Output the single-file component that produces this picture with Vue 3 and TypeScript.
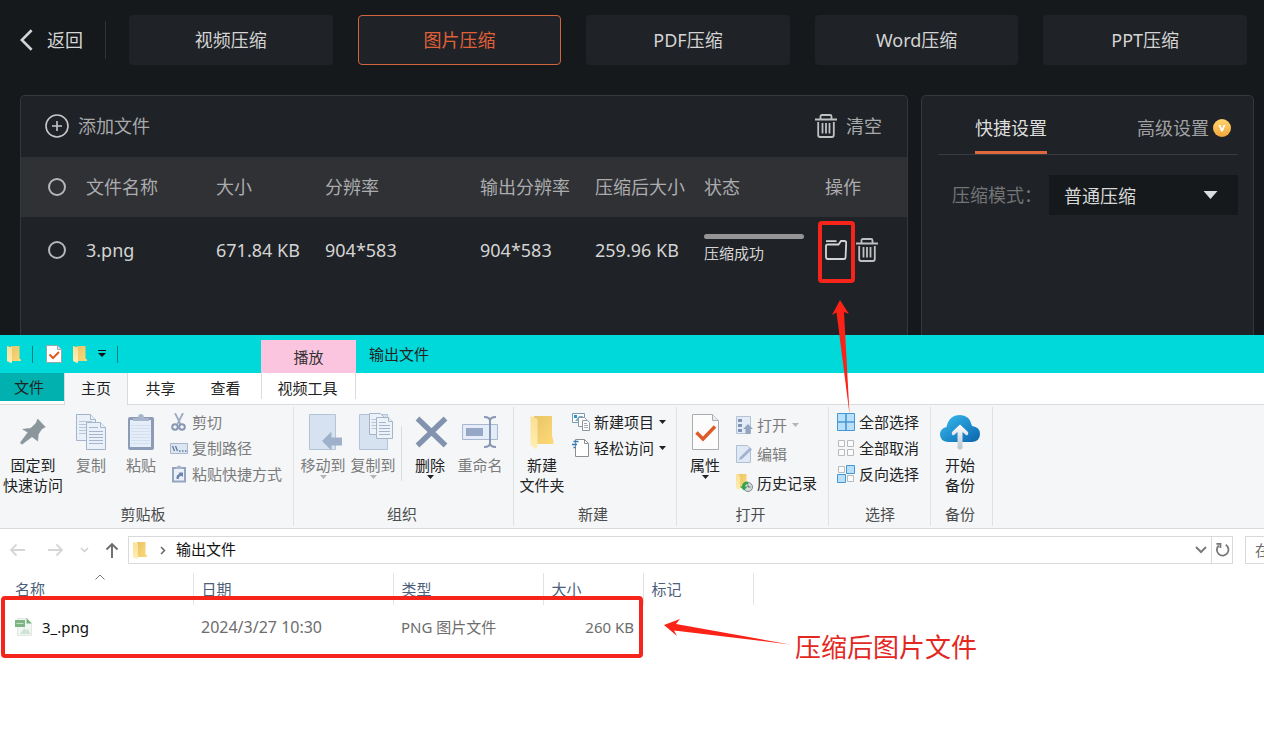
<script setup lang="ts">
import { ref } from 'vue'

interface Cmd {
  icon: string
  label: string[]
  off?: boolean
  arrow?: boolean
  wide?: boolean
}
interface Group {
  id: string
  label: string
  big: Cmd[]
  after?: Cmd[]
  small: Cmd[]
}

const modes = ['视频压缩', '图片压缩', 'PDF压缩', 'Word压缩', 'PPT压缩']
const activeMode = ref('图片压缩')
const preset = ref('普通压缩')
const columns = ['文件名称', '大小', '分辨率', '输出分辨率', '压缩后大小', '状态', '操作']

const groups: Group[] = [
  {
    id: 'clip',
    label: '剪贴板',
    big: [
      { icon: 'pin', label: ['固定到', '快速访问'], wide: true },
      { icon: 'copy', label: ['复制'], off: true },
      { icon: 'paste', label: ['粘贴'], off: true },
    ],
    small: [
      { icon: 'cut', label: ['剪切'], off: true },
      { icon: 'path', label: ['复制路径'], off: true },
      { icon: 'shortcut', label: ['粘贴快捷方式'], off: true },
    ],
  },
  {
    id: 'org',
    label: '组织',
    big: [
      { icon: 'moveto', label: ['移动到'], off: true, arrow: true },
      { icon: 'copyto', label: ['复制到'], off: true, arrow: true },
    ],
    after: [
      { icon: 'delete', label: ['删除'], arrow: true },
      { icon: 'rename', label: ['重命名'], off: true },
    ],
    small: [],
  },
  {
    id: 'new',
    label: '新建',
    big: [{ icon: 'newfolder', label: ['新建', '文件夹'] }],
    small: [
      { icon: 'newitem', label: ['新建项目'], arrow: true },
      { icon: 'easy', label: ['轻松访问'], arrow: true },
    ],
  },
  {
    id: 'open',
    label: '打开',
    big: [{ icon: 'props', label: ['属性'], arrow: true }],
    small: [
      { icon: 'open', label: ['打开'], off: true, arrow: true },
      { icon: 'edit', label: ['编辑'], off: true },
      { icon: 'history', label: ['历史记录'] },
    ],
  },
  {
    id: 'select',
    label: '选择',
    big: [],
    small: [
      { icon: 'all', label: ['全部选择'] },
      { icon: 'none', label: ['全部取消'] },
      { icon: 'invert', label: ['反向选择'] },
    ],
  },
  {
    id: 'backup',
    label: '备份',
    big: [{ icon: 'cloud', label: ['开始', '备份'] }],
    small: [],
  },
]
</script>

<template>
  <div class="page">
    <svg class="defs" aria-hidden="true">
      <defs>
        <linearGradient id="gFold" x1="0" x2="1" y1="0" y2="1">
          <stop offset="0" stop-color="#e8c469" /><stop offset="1" stop-color="#ffd977" />
        </linearGradient>
        <linearGradient id="gFlap" x1="0" x2="0" y1="0" y2="1">
          <stop offset="0" stop-color="#fbdf93" /><stop offset="1" stop-color="#ffeeb4" />
        </linearGradient>
        <linearGradient id="gCloud" x1="0" x2="1" y1="0" y2="1">
          <stop offset="0" stop-color="#38bdf0" /><stop offset="1" stop-color="#0a64ad" />
        </linearGradient>
        <linearGradient id="gUp" x1="0" x2="0" y1="0" y2="1">
          <stop offset="0" stop-color="#ffffff" /><stop offset="1" stop-color="#b9c2ce" />
        </linearGradient>
        <linearGradient id="gCoin" x1="0" x2="0" y1="0" y2="1">
          <stop offset="0" stop-color="#ffd56e" /><stop offset="1" stop-color="#f2a63a" />
        </linearGradient>
      </defs>
      <symbol id="trash" viewBox="0 0 22 24">
        <g fill="none" stroke="currentColor" stroke-width="1.8">
          <path d="M0 5.500h22M5.500 5V2.500Q5.500 1 7 1h8q1.500 0 1.500 1.500V5M3.200 8v13q0 2 2 2h11.600q2 0 2-2V8M7.500 9v10.500M11 9v10.500M14.500 9v10.500" />
        </g>
      </symbol>
      <symbol id="folder" viewBox="0 0 14 18">
        <path d="M4 1h8.500v12.500l1.500 1V16H4z" fill="url(#gFold)" />
        <path d="M0 1l5 1.500V17.500L4 18l-4-2z" fill="url(#gFlap)" />
      </symbol>
      <symbol id="pin" viewBox="0 0 44 37">
        <path d="M26.700 6l7.600 8-3.600 2-3.400 5.300-.6 6.700-5.700-4.300L11 31.300l-1.700-1.600L17 19.300l-5.300-3 8-1 5.300-5z" fill="#8b969c" stroke="#8b969c" stroke-width=".6" stroke-linejoin="round" />
      </symbol>
      <symbol id="copy" viewBox="0 0 44 37">
        <g fill="#eaf0f8" stroke="#a3b4cb">
          <path d="M7.500 1.500h14l5 5v21h-19z" /><path d="M21.500 1.500v5h5" />
          <path d="M10 8.500h13M10 11.500h13M10 14.500h13M10 17.500h13M10 20.500h13" stroke="#b7c6d9" />
          <path d="M17.500 9.500h14l5 5v22h-19z" /><path d="M31.500 9.500v5h5" />
          <path d="M20 14.500h9M20 18.500h14M20 21.500h14M20 24.500h14M20 27.500h14M20 30.500h14" />
        </g>
      </symbol>
      <symbol id="paste" viewBox="0 0 44 37">
        <rect x="9" y="4" width="26" height="33" rx="2" fill="#8d9cb6" />
        <path d="M11 7h21v27H11z" fill="#e4edf8" />
        <path d="M12 12.500h19M12 15.500h19M12 18.500h19M12 21.500h19M12 24.500h19M12 27.500h19M12 30.500h19" stroke="#d3e0ef" />
        <path d="M14 8V5h5q0-4 3-4t3 4h5v3z" fill="#a8b5ca" />
      </symbol>
      <symbol id="moveto" viewBox="0 0 44 37">
        <path d="M8.500 1.500h26v35h-26z" fill="#d7e2f1" stroke="#b5c3d8" />
        <path d="M21 28l9.500-9.500v6H41v8H30.500v5z" fill="#9fb1ca" />
      </symbol>
      <symbol id="copyto" viewBox="0 0 44 37">
        <path d="M8.500 1.500h28v35h-28z" fill="#d7e2f1" stroke="#b5c3d8" />
        <g fill="#edf2f9" stroke="#a3b4cb">
          <path d="M18.500.5h11l4 4v17h-15z" />
          <path d="M20.500 6.500h9M20.500 9.500h9M20.500 12.500h9M20.500 15.500h9" stroke="#b7c6d9" />
          <path d="M25.500 4.500h12l4 4v17h-16z" /><path d="M37.500 4.500v4h4" />
          <path d="M28 9.500h7M28 12.500h11M28 15.500h11M28 18.500h11M28 21.500h11" />
        </g>
      </symbol>
      <symbol id="delete" viewBox="0 0 44 37">
        <path d="M9.500 5.500l28 27M37.500 5.500l-28 27" stroke="#8393af" stroke-width="5.400" />
      </symbol>
      <symbol id="rename" viewBox="0 0 44 37">
        <path d="M4.500 11.500h35v15h-35z" fill="#e3ecf8" stroke="#a9b8ce" />
        <path d="M8 15h17v8H8z" fill="#96a7c3" />
        <path d="M26 4q6 0 6 4v22q0 4-6 4M38 4q-6 0-6 4v22q0 4 6 4" fill="none" stroke="#8797b4" stroke-width="2" />
      </symbol>
      <symbol id="newfolder" viewBox="0 0 44 37">
        <path d="M14 3h18v20l1.500 5V31H17z" fill="url(#gFold)" />
        <path d="M10.500 3l7 3v27l-1.500 3.500-5.500-4.500z" fill="url(#gFlap)" />
      </symbol>
      <symbol id="props" viewBox="0 0 44 37">
        <path d="M9.500 1.500h20l6 6v29h-26z" fill="#fcfcfd" stroke="#aaadb1" />
        <path d="M29.500 1.500v6h6" fill="#e8e9eb" stroke="#aaadb1" />
        <path d="M13.500 19.500l6.500 6.500L32 13.500" fill="none" stroke="#dd5b27" stroke-width="3.400" />
      </symbol>
      <symbol id="cloud" viewBox="0 0 44 37">
        <path d="M10 29q-8-1-8-7.500 0-6 6.500-7.500Q11 2 22 2q9.500 0 12 11 8 1 8 8t-8 8z" fill="url(#gCloud)" />
        <path d="M19.500 35V19l-4 3.500q-3-1-1-4L22 11.500l7.500 7q2 3-1 4l-4-3.500v16q-2.500 3-5 0z" fill="url(#gUp)" />
      </symbol>
      <symbol id="cut" viewBox="0 0 18 18">
        <path d="M5 0l5.500 11M13 0L7.500 11" fill="none" stroke="#9dabc0" stroke-width="1.800" />
        <circle cx="5" cy="14" r="2.800" fill="none" stroke="#8797b2" stroke-width="2" />
        <circle cx="12" cy="14" r="2.800" fill="none" stroke="#8797b2" stroke-width="2" />
      </symbol>
      <symbol id="path" viewBox="0 0 18 18">
        <path d="M.5 4.500h17v10H.5z" fill="#dce6f3" stroke="#a8b7cd" />
        <path d="M2.500 7l2 5M5.500 7l2 5M9 12h1.500M12 12h1.500M15 12h1.500" stroke="#647a9c" stroke-width="1.300" />
      </symbol>
      <symbol id="shortcut" viewBox="0 0 18 18">
        <path d="M2 2h14v15.500H2z" fill="#96a5be" /><path d="M4 4h10v11.500H4z" fill="#eaf0f9" />
        <path d="M6 2.500q3-4 6 0v1.500H6z" fill="#a8b5ca" />
        <path d="M6.500 14q-.5-4.500 3-5L8.500 7.500H13V12l-1.500-1.300Q9 11 8.700 14z" fill="#6c83a8" />
      </symbol>
      <symbol id="newitem" viewBox="0 0 18 18">
        <path d="M.5.500h12v9H.5z" fill="#fff" stroke="#7a9bb3" /><path d="M2 2h3v3H2z" fill="#2f95c9" /><path d="M7 3h4v5H3z" fill="#7bb0c4" />
        <path d="M6.500 4.500h6l2 2v7h-8z" fill="#fff" stroke="#8d969e" />
        <path d="M10.500 7.500h5l2 2v8h-7z" fill="#fff" stroke="#8d969e" />
        <path d="M12 10.500h3M12 12.500h4M12 14.500h4" stroke="#9eaab4" />
      </symbol>
      <symbol id="easy" viewBox="0 0 18 18">
        <path d="M3.500.500h9l4 4v13h-13z" fill="#fff" stroke="#8b8f94" /><path d="M12.500.500v4h4" fill="none" stroke="#8b8f94" />
        <path d="M1.500 2.500h5M0 5.500h5M1.500 8.500h2" stroke="#2b78b5" stroke-width="1.500" />
      </symbol>
      <symbol id="open" viewBox="0 0 18 18">
        <path d="M1.500.500h14v17h-14z" fill="#e3ebf6" stroke="#b5c3d6" />
        <path d="M3 3h4v3H3zM3 8h4v3H3zM3 13h4v3H3z" fill="#8093b2" />
        <path d="M13 8l5 5h-2.500v5h-5v-5H8z" fill="#93a5c1" />
      </symbol>
      <symbol id="edit" viewBox="0 0 18 18">
        <path d="M1.500.500h11l3 3v14h-14z" fill="#dfe8f5" stroke="#b0bfd4" />
        <path d="M4 15l1-3L15 2.500l2 2L7 14z" fill="#a1b3ce" />
      </symbol>
      <symbol id="history" viewBox="0 0 18 18">
        <path d="M3 0h8.500v14H3z" fill="url(#gFold)" /><path d="M1 0l4 1.500v14L1 15z" fill="url(#gFlap)" />
        <circle cx="13" cy="13" r="4.500" fill="#d5dadb" stroke="#7e898b" /><path d="M13 10.500V13h2.500" fill="none" stroke="#657174" />
        <path d="M13 7.500q-6 0-6 5H5l4 4 3.500-4H10q0-2 3-2.500z" fill="#31a34b" />
      </symbol>
      <symbol id="all" viewBox="0 0 18 18">
        <path d="M.5.500h17v17H.5z" fill="#b9e0fa" stroke="#4598d3" /><path d="M9 0v18M0 9h18" stroke="#4598d3" stroke-width="1.600" />
      </symbol>
      <symbol id="none" viewBox="0 0 18 18">
        <path d="M1.500 1.500h6v6h-6zM10.500 1.500h6v6h-6zM1.500 10.500h6v6h-6zM10.500 10.500h6v6h-6z" fill="#fbfbfb" stroke="#b9bcbf" />
      </symbol>
      <symbol id="invert" viewBox="0 0 18 18">
        <path d="M1.500 1.500h6v6h-6zM10.500 10.500h6v6h-6z" fill="#fbfbfb" stroke="#b9bcbf" />
        <path d="M9.500.500h8v8h-8zM.5 9.500h8v8h-8z" fill="#b9e0fa" stroke="#4598d3" />
      </symbol>
    </svg>

    <section class="app">
      <header class="top">
        <button class="back">
          <svg class="chev" viewBox="0 0 14 24"><path d="M12.500 1.500L2 12l10.500 10.500" fill="none" stroke="currentColor" stroke-width="2.800" /></svg>
          返回
        </button>
        <nav class="modes">
          <button v-for="m in modes" :key="m" class="mode" :class="{ on: m === activeMode }" @click="activeMode = m">{{ m }}</button>
        </nav>
      </header>

      <div class="body">
        <div class="panel">
          <div class="tools">
            <button class="tool">
              <svg class="plus" viewBox="0 0 24 24"><g fill="none" stroke="currentColor" stroke-width="1.600"><circle cx="12" cy="12" r="11" /><path d="M12 7v10M7 12h10" /></g></svg>
              添加文件
            </button>
            <button class="tool">
              <svg class="bin"><use href="#trash" /></svg>
              清空
            </button>
          </div>
          <table class="jobs">
            <colgroup>
              <col class="c1" /><col class="c2" /><col class="c3" /><col class="c4" /><col class="c5" /><col class="c3" /><col class="c6" /><col />
            </colgroup>
            <thead>
              <tr>
                <th><input type="checkbox" aria-label="全选" /></th>
                <th v-for="c in columns" :key="c">{{ c }}</th>
              </tr>
            </thead>
            <tbody>
              <tr>
                <td><input type="checkbox" aria-label="3.png" /></td>
                <td>3.png</td>
                <td>671.84 KB</td>
                <td>904*583</td>
                <td>904*583</td>
                <td>259.96 KB</td>
                <td><div class="bar"></div><div class="state">压缩成功</div></td>
                <td>
                  <div class="ops">
                    <button aria-label="打开文件夹" class="op">
                      <svg class="opf" viewBox="0 0 22 20"><path d="M1 1.200h10.500M1 6v11q0 2 2 2h16q1.500 0 1.600-2L21.200 2.800q0-1.800-1.700-1.800H16l-2.500 3.500H2.500Q1 4.500 1 6" fill="none" stroke="currentColor" stroke-width="1.800" /></svg>
                    </button>
                    <button aria-label="删除任务" class="op"><svg class="bin"><use href="#trash" /></svg></button>
                  </div>
                </td>
              </tr>
            </tbody>
          </table>
        </div>

        <aside class="panel side">
          <div class="tabs">
            <button class="tab on">快捷设置</button>
            <button class="tab">
              高级设置
              <svg class="coin" viewBox="0 0 18 18"><circle cx="9" cy="9" r="9" fill="url(#gCoin)" /><path d="M5.500 6h2L9 10l1.500-4h2L9.800 12.500H8.200z" fill="#fff" /></svg>
            </button>
          </div>
          <div class="setting">
            <label for="preset">压缩模式：</label>
            <div class="pick">
              <select id="preset" v-model="preset"><option>普通压缩</option><option>高级压缩</option></select>
              <svg class="tri" viewBox="0 0 14 8"><path d="M0 0h14L7 8z" fill="#dcdcdc" /></svg>
            </div>
          </div>
        </aside>
      </div>
    </section>

    <section class="explorer">
      <header class="title">
        <div class="quick">
          <svg class="fold"><use href="#folder" /></svg>
          <i class="tick"></i>
          <button aria-label="属性" class="qb">
            <svg class="doc" viewBox="0 0 16 18"><path d="M.5.500h11l4 4v13H.5z" fill="#fff" stroke="#9aa5aa" /><path d="M11.500.500v4h4" fill="#dde" stroke="#9aa5aa" /><path d="M3.500 9.500l3.500 3.500 6-6" fill="none" stroke="#dd5b27" stroke-width="2" /></svg>
          </button>
          <button aria-label="新建文件夹" class="qb"><svg class="fold"><use href="#folder" /></svg></button>
          <button aria-label="自定义快速访问工具栏" class="qb">
            <svg class="cust" viewBox="0 0 8 8"><path d="M0 .5h8" stroke="#111" /><path d="M0 3h8L4 7z" fill="#111" /></svg>
          </button>
          <i class="tick"></i>
        </div>
        <div class="context">播放</div>
        <h1>输出文件</h1>
      </header>

      <nav class="rtabs">
        <button class="file">文件</button>
        <button class="home">主页</button>
        <button class="plain">共享</button>
        <button class="plain">查看</button>
        <button class="video">视频工具</button>
      </nav>

      <div class="ribbon">
        <div v-for="g in groups" :key="g.id" class="group" :class="g.id">
          <div class="cmds">
            <button v-for="c in g.big" :key="c.icon" class="big" :class="{ off: c.off, wide: c.wide }">
              <svg class="bi"><use :href="'#' + c.icon" /></svg>
              <span v-for="l in c.label" :key="l">{{ l }}</span>
              <svg v-if="c.arrow" class="dn" viewBox="0 0 7 4"><path d="M0 0h7L3.500 4z" fill="currentColor" /></svg>
            </button>
            <i v-if="g.after" class="rule"></i>
            <button v-for="c in g.after" :key="c.icon" class="big" :class="{ off: c.off }">
              <svg class="bi"><use :href="'#' + c.icon" /></svg>
              <span v-for="l in c.label" :key="l">{{ l }}</span>
              <svg v-if="c.arrow" class="dn" viewBox="0 0 7 4"><path d="M0 0h7L3.500 4z" fill="currentColor" /></svg>
            </button>
            <div v-if="g.small.length" class="stack">
              <button v-for="c in g.small" :key="c.icon" class="small" :class="{ off: c.off }">
                <svg class="si"><use :href="'#' + c.icon" /></svg>
                <span>{{ c.label[0] }}</span>
                <svg v-if="c.arrow" class="dn" viewBox="0 0 7 4"><path d="M0 0h7L3.500 4z" fill="currentColor" /></svg>
              </button>
            </div>
          </div>
          <div class="gname">{{ g.label }}</div>
        </div>
      </div>

      <div class="address">
        <div class="navs">
          <button aria-label="后退"><svg class="nv" viewBox="0 0 16 14"><path d="M16 7H2M7.500 1.500L2 7l5.500 5.500" fill="none" stroke="#d6d6d6" stroke-width="1.800" /></svg></button>
          <button aria-label="前进"><svg class="nv" viewBox="0 0 16 14"><path d="M0 7h14M8.500 1.500L14 7l-5.500 5.500" fill="none" stroke="#d6d6d6" stroke-width="1.800" /></svg></button>
          <button aria-label="最近浏览的位置"><svg class="mini" viewBox="0 0 9 6"><path d="M1 1l3.500 3.500L8 1" fill="none" stroke="#cfcfcf" stroke-width="1.500" /></svg></button>
          <button aria-label="上移"><svg class="up" viewBox="0 0 14 16"><path d="M7 16V2M1.500 7.500L7 2l5.500 5.500" fill="none" stroke="#6c6c6c" stroke-width="1.900" /></svg></button>
        </div>
        <div class="crumbs">
          <svg class="fold"><use href="#folder" /></svg>
          <svg class="gt" viewBox="0 0 6 9"><path d="M1 1l3.500 3.500L1 8" fill="none" stroke="#666" stroke-width="1.500" /></svg>
          <a href="#">输出文件</a>
          <button class="hist" aria-label="历史位置"><svg viewBox="0 0 12 8"><path d="M1 1l5 5 5-5" fill="none" stroke="#7b7b7b" stroke-width="2" /></svg></button>
          <button class="ref" aria-label="刷新"><svg viewBox="0 0 16 16"><path d="M11.500 2.500A6.200 6.200 0 1 1 4 3.200M1.500 1.500h4.300v4.300" fill="none" stroke="#777" stroke-width="1.900" /></svg></button>
        </div>
        <input class="search" aria-label="搜索" placeholder="在" />
      </div>

      <table class="files">
        <colgroup><col class="f1" /><col class="f2" /><col class="f3" /><col class="f4" /><col class="f5" /><col /></colgroup>
        <thead>
          <tr>
            <th>名称<svg class="sort" viewBox="0 0 10 6"><path d="M.5 5.500L5 1l4.500 4.500" fill="none" stroke="#777" /></svg></th>
            <th>日期</th>
            <th>类型</th>
            <th>大小</th>
            <th>标记</th>
            <td></td>
          </tr>
        </thead>
        <tbody>
          <tr>
            <td>
              <div class="fname">
                <svg class="png" viewBox="0 0 18 18"><path d="M2.500.500h9l5 5v12h-14z" fill="#f2f7f4" stroke="#dfe9e2" /><path d="M11.500 0v5.500H17z" fill="#74b47a" /><path d="M0 2h10v7H0z" fill="#7db583" /><path d="M1.500 5.500h7" stroke="#c6e0c8" /><path d="M5 16l4.500-6 2 2.500 1.500-1.500 2.500 5z" fill="#cfe3d8" /></svg>
                3_.png
              </div>
            </td>
            <td class="date">2024/3/27 10:30</td>
            <td>PNG 图片文件</td>
            <td class="num">260 KB</td>
            <td></td>
            <td></td>
          </tr>
        </tbody>
      </table>
    </section>

    <div class="mark folder-mark"></div>
    <div class="mark row-mark"></div>
    <svg class="arrow-a" viewBox="0 0 20 114"><path d="M8 0l9 14-5-2 5.500 102L4.500 12.500 0 15z" fill="#fb2318" /></svg>
    <svg class="arrow-b" viewBox="0 0 126 26"><path d="M0 6L16 0l-4 5L126 25.500 10 11.500l3 5.500z" fill="#fb2318" /></svg>
    <p class="note">压缩后图片文件</p>
  </div>
</template>

<style>
body {
  margin: 0;
  background: #fff;
}
</style>

<style scoped>
.page {
  position: relative;
  display: flex;
  flex-direction: column;
  min-height: 100vh;
  overflow: hidden;
  font-family: 'Noto Sans', 'Noto Sans CJK SC', sans-serif;
  font-size: 15px;
  line-height: 20px;
}
.page * {
  box-sizing: border-box;
}
.defs {
  position: absolute;
  width: 0;
  height: 0;
}
svg {
  display: block;
  flex: none;
}
button,
select,
input {
  font: inherit;
  color: inherit;
  background: none;
  border: 0;
  padding: 0;
  margin: 0;
}
table {
  border-collapse: collapse;
  table-layout: fixed;
  width: 100%;
}
th,
td {
  padding: 0;
  font-weight: 400;
  text-align: left;
  white-space: nowrap;
}

/* compressor */
.app {
  height: 335px;
  display: flex;
  flex-direction: column;
  background: #15191b;
  color: #d4d4d4;
  font-size: 18px;
  line-height: 24px;
}
.top {
  display: flex;
  align-items: center;
  padding: 15px 17px 0 20px;
}
.back {
  display: flex;
  align-items: center;
  gap: 14px;
  height: 38px;
  width: 86px;
  border-right: 1px solid #303438;
  white-space: nowrap;
}
.chev {
  width: 13px;
  height: 24px;
}
.modes {
  flex: 1;
  display: grid;
  grid-template-columns: repeat(5, 1fr);
  gap: 25px;
  margin-left: 23px;
}
.mode {
  height: 50px;
  border-radius: 4px;
  background: #1f2226;
}
.mode.on {
  border: 1px solid #d2643f;
  color: #e0603a;
}
.body {
  flex: 1;
  display: flex;
  gap: 13px;
  padding: 30px 10px 0 20px;
}
.panel {
  flex: 1;
  background: #1f2226;
  border: 1px solid #34373b;
  border-bottom: 0;
  border-radius: 5px 5px 0 0;
}
.tools {
  display: flex;
  justify-content: space-between;
  height: 61px;
  padding: 0 25px 2px 24px;
  color: #a8a9ab;
}
.tool {
  display: flex;
  align-items: center;
  gap: 9px;
}
.plus {
  width: 24px;
  height: 24px;
  color: #c6c7c8;
}
.bin {
  width: 22px;
  height: 24px;
  color: #bfc0c2;
}
.c1 { width: 65px; }
.c2 { width: 130px; }
.c3 { width: 109px; }
.c4 { width: 155px; }
.c5 { width: 115px; }
.c6 { width: 121px; }
.jobs th {
  height: 60px;
  background: #303135;
  color: #abacae;
}
.jobs td {
  height: 66px;
  padding-bottom: 1px;
}
.jobs input {
  display: block;
  appearance: none;
  width: 18px;
  height: 18px;
  margin-left: 27px;
  border: 2px solid #b5b6b8;
  border-radius: 50%;
}
.bar {
  width: 100px;
  height: 5px;
  border-radius: 3px;
  background: #959597;
}
.state {
  font-size: 15px;
  margin-top: 2px;
}
.ops {
  display: flex;
  align-items: center;
  gap: 9px;
}
.opf {
  width: 22px;
  height: 20px;
}
.side {
  flex: 0 0 333px;
  padding: 0 15px 0 16px;
}
.tabs {
  display: flex;
  justify-content: space-between;
  height: 59px;
  padding: 0 7px 0 37px;
  border-bottom: 1px solid #383b3f;
}
.tab {
  display: flex;
  align-items: center;
  gap: 4px;
  padding-top: 8px;
  border-bottom: 3px solid transparent;
  color: #a0a1a3;
}
.tab.on {
  color: #dedede;
  border-color: #e0683f;
}
.coin {
  width: 18px;
  height: 18px;
}
.setting {
  display: flex;
  align-items: center;
  margin-top: 20px;
  padding-left: 14px;
  color: #727476;
}
.setting label {
  width: 97px;
  white-space: nowrap;
}
.pick {
  flex: 1;
  position: relative;
}
.pick select {
  appearance: none;
  width: 100%;
  height: 40px;
  padding: 2px 15px 0;
  background: #15191b;
  color: #d8d8d8;
}
.tri {
  position: absolute;
  right: 20px;
  top: 16px;
  width: 15px;
  height: 8px;
  pointer-events: none;
}

/* explorer */
.explorer {
  flex: 1;
  background: #fff;
  color: #222;
}
.title {
  display: flex;
  height: 38px;
  background: #00d9d9;
}
.quick {
  display: flex;
  align-items: center;
  gap: 11px;
  width: 261px;
  padding-left: 7px;
}
.fold {
  width: 14px;
  height: 18px;
}
.tick {
  width: 1px;
  height: 17px;
  background: #087f80;
  margin-right: 2px;
}
.doc {
  width: 16px;
  height: 18px;
}
.cust {
  width: 8px;
  height: 8px;
}
.context {
  width: 95px;
  margin-top: 5px;
  line-height: 34px;
  text-align: center;
  background: #fbc5df;
  color: #333;
}
.title h1 {
  margin: 0 0 0 13px;
  font-size: 15px;
  font-weight: 400;
  line-height: 39px;
}
.rtabs {
  display: flex;
  height: 32px;
  border-bottom: 1px solid #dadbdc;
}
.rtabs button {
  width: 65px;
  padding-bottom: 2px;
}
.rtabs .file {
  width: 64px;
  height: 28px;
  padding: 0 6px 0 0;
  background: #00b1b0;
}
.rtabs .home {
  height: 32px;
  width: 64px;
  background: #f4f6f8;
  border: 1px solid #dadbdc;
  border-width: 0 1px;
}
.rtabs .video {
  width: 95px;
  height: 26px;
  padding: 4px 2px 0 0;
  margin-left: 3px;
  border: 1px solid #dadbdc;
  border-width: 0 1px;
}
.ribbon {
  display: flex;
  height: 124px;
  padding-top: 2px;
  background: #f4f6f8;
  border-bottom: 1px solid #dadbdc;
}
.group {
  display: flex;
  flex-direction: column;
  height: 119px;
  border-right: 1px solid #e0e1e3;
}
.clip { width: 294px; }
.org { width: 220px; padding-left: 4px; }
.new { width: 163px; padding-left: 3px; }
.open { width: 152px; padding-left: 3px; }
.select { width: 102px; padding-left: 8px; }
.backup { width: 62px; padding-left: 4px; }
.cmds {
  flex: 1;
  display: flex;
  align-items: flex-start;
}
.gname {
  text-align: center;
  line-height: 20px;
  padding: 0 7px 2px 0;
  color: #4c4c4c;
}
.big {
  display: flex;
  flex-direction: column;
  align-items: center;
  width: 50px;
  padding-top: 6px;
  white-space: nowrap;
}
.big.wide {
  width: 66px;
}
.off {
  color: #7b7b7b;
}
.bi {
  width: 44px;
  height: 37px;
  margin-bottom: 5px;
}
.dn {
  width: 7px;
  height: 4px;
}
.off .dn {
  color: #b5b5b5;
}
.rule {
  width: 1px;
  height: 55px;
  margin: 19px 3px 0;
  background: #dcdde0;
}
.stack {
  display: flex;
  flex-direction: column;
  padding: 2px 0 0 4px;
}
.select .stack {
  padding-left: 0;
}
.open .big {
  width: 50px;
}
.new .stack {
  padding-left: 5px;
}
.open .stack {
  padding: 3px 0 0 5px;
}
.small {
  display: flex;
  align-items: center;
  gap: 4px;
  height: 26px;
  white-space: nowrap;
}
.open .small {
  height: 29px;
}
.small .dn {
  margin-left: 1px;
}
.si {
  width: 18px;
  height: 18px;
}
.address {
  display: flex;
  padding-top: 7px;
}
.navs {
  display: flex;
  align-items: center;
  gap: 16px;
  width: 128px;
  padding-left: 9px;
}
.navs button:first-child {
  margin-right: 7px;
}
.nv {
  width: 16px;
  height: 14px;
}
.mini {
  width: 9px;
  height: 6px;
}
.up {
  width: 14px;
  height: 16px;
}
.crumbs {
  flex: 1;
  display: flex;
  align-items: center;
  height: 28px;
  padding-left: 4px;
  border: 1px solid #d9d9d9;
}
.gt {
  width: 6px;
  height: 9px;
  margin: 0 10px 0 13px;
}
.crumbs a {
  flex: 1;
  padding-bottom: 2px;
  color: #111;
  text-decoration: none;
}
.hist svg {
  width: 12px;
  height: 8px;
}
.hist {
  padding-right: 4px;
}
.ref {
  display: flex;
  align-items: center;
  height: 26px;
  padding: 0 2px 0 3px;
  border-left: 1px solid #d9d9d9;
}
.ref svg {
  width: 15px;
  height: 16px;
}
.search {
  width: 19px;
  height: 28px;
  margin-left: 12px;
  padding-left: 9px;
  border: 1px solid #d9d9d9;
  border-right: 0;
}
.search::placeholder {
  color: #6d6d6d;
  opacity: 1;
}
.files {
  margin-top: 9px;
  color: #6d6d6d;
}
.f1 { width: 193px; }
.f2 { width: 200px; }
.f3 { width: 150px; }
.f4 { width: 100px; }
.f5 { width: 110px; }
.files th {
  position: relative;
  height: 32px;
  padding: 0 0 0 8px;
  border-right: 1px solid #e2e2e2;
  color: #4c607a;
}
.files th:first-child,
.files td:first-child {
  padding-left: 15px;
}
.files td {
  height: 46px;
  padding: 0 0 2px 8px;
}
.files thead td {
  height: 32px;
}
.files .date {
  font-size: 16px;
}
.sort {
  position: absolute;
  left: 95px;
  top: 1px;
  width: 10px;
  height: 6px;
}
.fname {
  display: flex;
  align-items: center;
  gap: 9px;
  color: #111;
}
.png {
  width: 18px;
  height: 18px;
}
.files .num {
  text-align: right;
  padding-right: 9px;
}

/* callouts over the content */
.mark {
  position: absolute;
  border: 4px solid #f6251b;
  border-radius: 4px;
  pointer-events: none;
}
.folder-mark {
  left: 818px;
  top: 221px;
  width: 37px;
  height: 62px;
}
.row-mark {
  left: 1px;
  top: 596px;
  width: 642px;
  height: 62px;
}
.arrow-a {
  position: absolute;
  left: 832px;
  top: 300px;
  width: 20px;
  height: 114px;
}
.arrow-b {
  position: absolute;
  left: 664px;
  top: 619px;
  width: 126px;
  height: 26px;
}
.note {
  position: absolute;
  left: 795px;
  top: 630px;
  margin: 0;
  font-size: 26px;
  line-height: 34px;
  color: #e3281f;
  white-space: nowrap;
}
</style>
